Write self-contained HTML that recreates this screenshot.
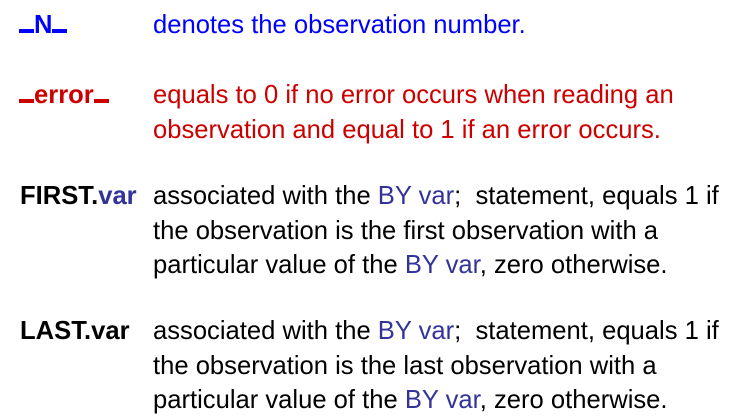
<!DOCTYPE html>
<html><head><style>
body{margin:0;width:739px;height:420px;background:#fff;font-family:"Liberation Sans",Arial,sans-serif;font-size:25.6px;position:relative;overflow:hidden}
div{position:absolute;line-height:34px;white-space:nowrap}
.l{left:19px;font-weight:bold}
.r{left:153px}
.b{color:#0000ff}.red{color:#cc0000}.n{color:#333399}
.u{display:inline-block;width:15px;height:4px;background:currentColor;vertical-align:baseline}
</style></head><body>
<div class="l b" style="top:8px"><span class="u"></span>N<span class="u"></span></div>
<div class="r b" style="top:8px">denotes the observation number.</div>
<div class="l red" style="top:78px"><span class="u"></span>error<span class="u"></span></div>
<div class="r red" style="top:78px;line-height:34.5px">equals to 0 if no error occurs when reading an<br>observation and equal to 1 if an error occurs.</div>
<div class="l" style="top:179px;left:20px">FIRST.<span class="n">var</span></div>
<div class="r" style="top:179px;line-height:34.5px">associated with the <span class="n">BY var</span>;&nbsp; statement, equals 1 if<br>the observation is the first observation with a<br>particular value of the <span class="n">BY var</span>, zero otherwise.</div>
<div class="l" style="top:314px;left:20px">LAST.var</div>
<div class="r" style="top:314px;line-height:34.5px">associated with the <span class="n">BY var</span>;&nbsp; statement, equals 1 if<br>the observation is the last observation with a<br>particular value of the <span class="n">BY var</span>, zero otherwise.</div>
</body></html>
